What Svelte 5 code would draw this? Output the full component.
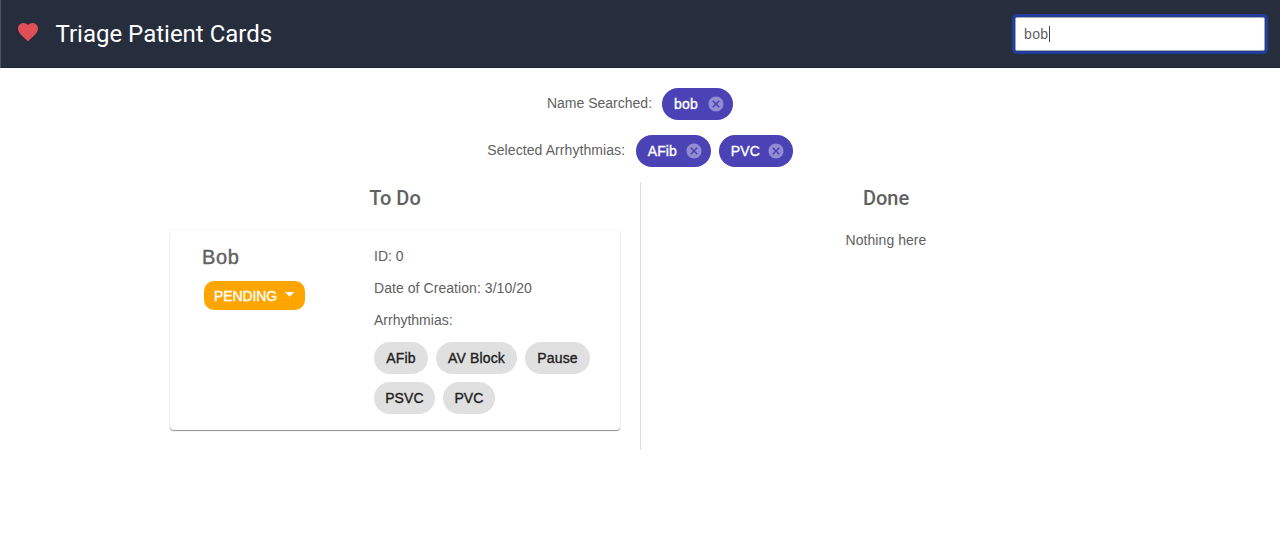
<script>
  let query = $state('bob');
  let names = $state([{ label: 'bob', width: 71 }]);
  let selected = $state([
    { label: 'AFib', width: 75 },
    { label: 'PVC', width: 74 }
  ]);
  const arrhythmias = [
    { label: 'AFib', width: 54 },
    { label: 'AV Block', width: 81 },
    { label: 'Pause', width: 65 },
    { label: 'PSVC', width: 61 },
    { label: 'PVC', width: 52 }
  ];
</script>

{#snippet filterChip(chip, remove)}
  <span class="chip filter" style:width="{chip.width}px">
    <span class="chip-text">{chip.label}</span>
    <svg viewBox="0 0 24 24" role="button" tabindex="-1" onclick={remove} onkeydown={remove}>
      <path d="M12 2C6.47 2 2 6.47 2 12s4.47 10 10 10 10-4.47 10-10S17.53 2 12 2zm5 13.59L15.59 17 12 13.41 8.41 17 7 15.59 10.59 12 7 8.41 8.41 7 12 10.59 15.59 7 17 8.41 13.41 12 17 15.59z" />
    </svg>
  </span>
{/snippet}

<header>
  <svg class="heart" viewBox="0 0 24 24">
    <path d="M12 21.35l-1.45-1.32C5.4 15.36 2 12.28 2 8.5 2 5.42 4.42 3 7.5 3c1.74 0 3.41.81 4.5 2.09C13.09 3.81 14.76 3 16.5 3 19.58 3 22 5.42 22 8.5c0 3.78-3.4 6.86-8.55 11.54L12 21.35z" />
  </svg>
  <h1>Triage Patient Cards</h1>
  <div class="search"><span>{query}</span><i class="caret"></i></div>
</header>

<section class="filters">
  <div class="filter-row">
    <span class="filter-label name">Name Searched:</span>
    {#each names as chip}
      {@render filterChip(chip, () => (names = names.filter((c) => c !== chip)))}
    {/each}
  </div>
  <div class="filter-row">
    <span class="filter-label picked">Selected Arrhythmias:</span>
    {#each selected as chip}
      {@render filterChip(chip, () => (selected = selected.filter((c) => c !== chip)))}
    {/each}
  </div>
</section>

<main>
  <section class="column todo">
    <h2>To Do</h2>
    <article>
      <div class="summary">
        <h3>Bob</h3>
        <button>
          <span>PENDING</span>
          <svg viewBox="0 0 10 5"><path d="M0 0h9.4L4.7 4.7z" /></svg>
        </button>
      </div>
      <div class="details">
        <p class="id">ID: 0</p>
        <p class="date">Date of Creation: 3/10/20</p>
        <p class="arr">Arrhythmias:</p>
        <div class="chips">
          {#each arrhythmias as chip}
            <span class="chip plain" style:width="{chip.width}px"><span class="chip-text">{chip.label}</span></span>
          {/each}
        </div>
      </div>
    </article>
  </section>
  <section class="column done">
    <h2>Done</h2>
    <p class="empty">Nothing here</p>
  </section>
</main>

<style>
  :global(body) {
    background: #fff;
    color: #616161;
    font: 14px/20px "Liberation Sans", Arial, sans-serif;
  }
  h1, h2, h3, p { margin: 0; }
  header {
    box-sizing: border-box;
    height: 68px;
    display: flex;
    align-items: center;
    padding: 0 15px 0 15px;
    border-left: 1px solid #4b5263;
    background: #262d3d;
    box-shadow: inset 0 -1px #202636;
  }
  .heart {
    width: 24px;
    height: 24px;
    margin: -4px 15.5px 0 0;
    fill: #e04f55;
  }
  h1 {
    color: #fff;
    font: 400 24px/32px Roboto, sans-serif;
    white-space: nowrap;
  }
  .search {
    box-sizing: border-box;
    width: 250px;
    height: 34px;
    margin-left: auto;
    padding: 0 8px;
    display: flex;
    align-items: center;
    border: 1px solid #a3a7b4;
    border-radius: 2px;
    background: #fff;
    color: #616161;
    letter-spacing: 0.4px;
    box-shadow: 0 0 0 3px #213c9b;
  }
  .caret {
    width: 1px;
    height: 16px;
    margin-left: 0.5px;
    background: #444;
  }
  .filters {
    padding-top: 20px;
    display: flex;
    flex-direction: column;
    gap: 15px;
  }
  .filter-row {
    display: flex;
    justify-content: center;
    gap: 8px;
    height: 32px;
  }
  .filter-label {
    padding-top: 5px;
    margin-right: 2px;
    white-space: nowrap;
  }
  .picked {
    letter-spacing: 0.08px;
    margin-right: 2.5px;
  }
  .chip {
    box-sizing: border-box;
    flex: none;
    height: 32px;
    border-radius: 16px;
    display: flex;
    align-items: center;
  }
  .chip-text {
    white-space: nowrap;
    letter-spacing: 0.15px;
    -webkit-text-stroke: 0.35px currentColor;
  }
  .filter {
    justify-content: space-between;
    padding: 0 8px 0 12px;
    background: #4a42b5;
    color: #fff;
  }
  .filter svg {
    width: 18px;
    height: 18px;
    fill: #fff;
    fill-opacity: 0.4;
  }
  .plain {
    justify-content: center;
    background: #e0e0e0;
    color: #212121;
  }
  main {
    display: grid;
    grid-template-columns: 471px 490px;
    padding: 15px 0 0 170px;
  }
  .column { height: 268px; }
  .todo {
    box-sizing: border-box;
    border-right: 1px solid #dcdcdc;
    padding-right: 20px;
  }
  h2 {
    padding-top: 4px;
    text-align: center;
    font: 500 20px/24px Roboto, sans-serif;
  }
  article {
    box-sizing: border-box;
    width: 450px;
    height: 200px;
    margin-top: 20px;
    padding: 16px 22px 0 32px;
    display: grid;
    grid-template-columns: 172px 1fr;
    border-radius: 4px;
    box-shadow: 0 1px 1px rgba(0, 0, 0, 0.42), 0 0 2px rgba(0, 0, 0, 0.1);
  }
  h3 {
    font-size: 20px;
    font-weight: 400;
    line-height: 22px;
    padding-bottom: 2px;
    letter-spacing: 0.7px;
    -webkit-text-stroke: 0.4px currentColor;
  }
  button {
    width: 101px;
    height: 29px;
    margin: 11px 0 0 2px;
    padding: 0 10px;
    display: flex;
    align-items: center;
    justify-content: space-between;
    border: 0;
    border-radius: 10px;
    background: #ffa500;
    color: #fff;
    font: 14px/20px "Liberation Sans", Arial, sans-serif;
    letter-spacing: -0.1px;
    -webkit-text-stroke: 0.35px currentColor;
  }
  button svg {
    width: 10px;
    height: 5px;
    margin-top: -3px;
    fill: #fff;
    stroke: none;
  }
  .details p { height: 32px; white-space: nowrap; }
  .date { letter-spacing: 0.06px; }
  .chips {
    display: flex;
    flex-wrap: wrap;
    gap: 8px;
  }
  .empty {
    padding-top: 20px;
    text-align: center;
    letter-spacing: 0.06px;
  }
</style>
